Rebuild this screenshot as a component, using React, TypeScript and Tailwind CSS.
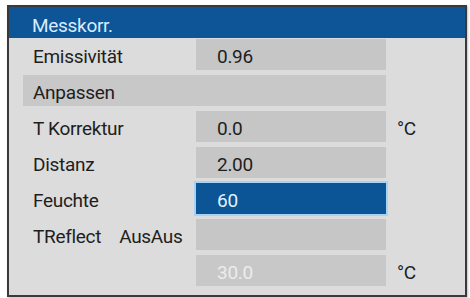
const font = { fontFamily: 'Roboto, "Liberation Sans", sans-serif' };

interface RowProps {
  label?: string;
  extra?: string;
  value?: string;
  unit?: string;
  active?: boolean;
  disabled?: boolean;
}

function Row({ label, extra, value, unit, active, disabled }: RowProps) {
  return (
    <div className="flex h-[31px] items-stretch">
      <div className="flex w-[173px] items-center pl-[10px] pt-[3px] text-[#1e1e1e]">
        <span>{label}</span>
        {extra ? <span className="ml-[18px]">{extra}</span> : null}
      </div>
      <div
        className={
          active
            ? "flex w-[190px] items-center bg-[#0b5596] pl-[21px] pt-[3px] text-[#e4f1ff] shadow-[0_0_0_2px_#a6d2f6]"
            : disabled
              ? "flex w-[190px] items-center bg-[#c8c8c8] pl-[21px] pt-[3px] text-[#ececec]"
              : "flex w-[190px] items-center bg-[#c6c6c6] pl-[21px] pt-[3px] text-[#1e1e1e]"
        }
      >
        {value}
      </div>
      {unit ? (
        <div className="ml-[11px] flex items-center pt-[3px] text-[#1e1e1e]">{unit}</div>
      ) : null}
    </div>
  );
}

export default function App() {
  return (
    <div className="h-[298px] w-[470px] bg-white pl-[7px] pt-[5px]" style={font}>
      <div className="h-[292px] w-[460px] border-2 border-[#3a3a3a] bg-[#dcdcdc] text-[19px] leading-none tracking-[-0.3px] shadow-[1px_1px_2px_rgba(0,0,0,0.25)]">
        <div className="flex h-[31px] items-center bg-[#0d5596] pl-[23px] pt-[5px] text-[#d9ecff]">
          Messkorr.
        </div>
        <div className="flex flex-col gap-[5px] pl-[14px] pt-[1px]">
          <Row label="Emissivität" value="0.96" />
          <div className="flex h-[31px] w-[363px] items-center bg-[#c8c8c8] pl-[10px] pt-[3px] text-[#1e1e1e]">
            Anpassen
          </div>
          <Row label="T Korrektur" value="0.0" unit="°C" />
          <Row label="Distanz" value="2.00" />
          <Row label="Feuchte" value="60" active />
          <Row label="TReflect" extra="AusAus" />
          <Row value="30.0" unit="°C" disabled />
        </div>
      </div>
    </div>
  );
}
